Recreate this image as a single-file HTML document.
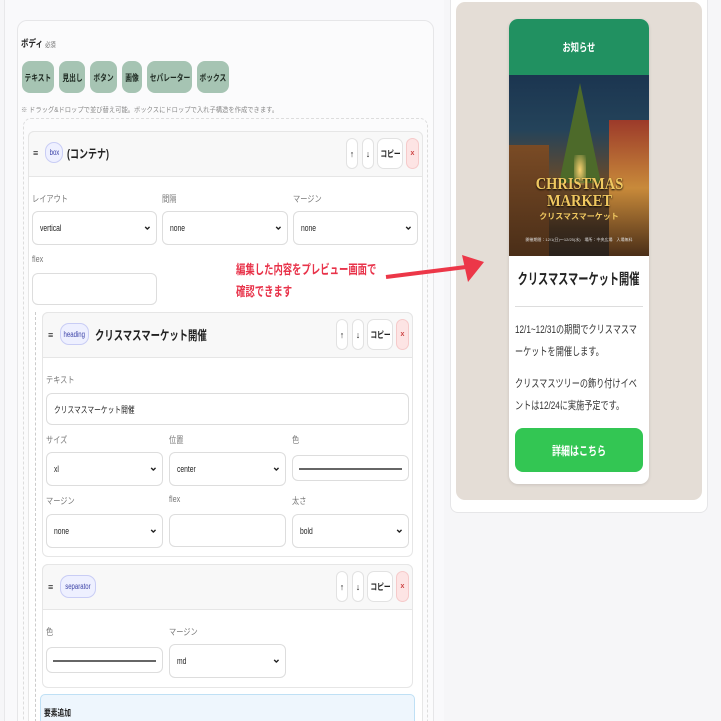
<!DOCTYPE html>
<html><head><meta charset="utf-8"><style>
*{box-sizing:border-box;margin:0;padding:0}
html,body{width:721px;height:721px;overflow:hidden}
body{background:#f6f6f8;font-family:"Liberation Sans","Noto Sans CJK JP",sans-serif;color:#222;position:relative}
.a{position:absolute;white-space:nowrap}
.c{display:inline-block;transform:scaleX(.75);transform-origin:left center;white-space:nowrap}
.cc{display:inline-block;transform:scaleX(.75);transform-origin:center center;white-space:nowrap}
.lbl{position:absolute;font-size:9px;color:#777;transform:scaleX(.8);transform-origin:left}
.inp{position:absolute;background:#fff;border:1px solid #ddd;border-radius:6px;font-size:9px;color:#222;padding-left:7px;display:flex;align-items:center;white-space:nowrap}
.sel::after{content:"⌄";position:absolute;right:4px;top:50%;transform:translateY(-65%);font-size:11px;font-weight:bold}
.line{position:absolute;height:1.5px;background:#666;left:6px;right:6px;top:50%}
.tb{position:absolute;background:#fff;border:1px solid #e2e2e2;border-radius:7px;font-size:9px;font-weight:bold;display:flex;align-items:center;justify-content:center;white-space:nowrap}
.x{background:#fde4e4;border-color:#f6caca;color:#c44;font-size:7px}
.badge{position:absolute;background:#eef0ff;border:1px solid #c9cdf5;border-radius:9px;font-size:8px;color:#3d44a8;display:flex;align-items:center;justify-content:center;white-space:nowrap}
.gb{position:absolute;top:61px;height:32px;background:#a6c4b3;border-radius:8px;font-size:9px;font-weight:bold;display:flex;align-items:center;justify-content:center;color:#1e2a22;white-space:nowrap}
</style></head><body>
<div class="a" style="left:4px;top:0;width:440px;height:721px;background:#f9f9fb;border-left:1px solid #e8e8ea"></div>
<div class="a" style="left:17px;top:20px;width:417px;height:720px;background:#fbfbfc;border:1px solid #e6e6e8;border-radius:10px"></div>
<div class="a" style="left:21px;top:35px;font-size:10px;font-weight:bold"><span class="c">ボディ <span style="font-size:7px;color:#666;font-weight:normal">必須</span></span></div>
<div class="gb" style="left:22px;width:32px"><span class="cc">テキスト</span></div>
<div class="gb" style="left:59px;width:26px"><span class="cc">見出し</span></div>
<div class="gb" style="left:90px;width:27px"><span class="cc">ボタン</span></div>
<div class="gb" style="left:122px;width:20px"><span class="cc">画像</span></div>
<div class="gb" style="left:147px;width:45px"><span class="cc">セパレーター</span></div>
<div class="gb" style="left:197px;width:32px"><span class="cc">ボックス</span></div>
<div class="a" style="left:21px;top:105px;font-size:7px;color:#888"><span class="c" style="transform:scaleX(.9)">※ ドラッグ&amp;ドロップで並び替え可能。ボックスにドロップで入れ子構造を作成できます。</span></div>
<div class="a" style="left:23px;top:118px;width:405px;height:620px;border:1px dashed #ddd;border-radius:8px"></div>
<div class="a" style="left:28px;top:131px;width:395px;height:600px;background:#fff;border:1px solid #e6e6e6;border-radius:6px"></div>
<div class="a" style="left:28px;top:131px;width:395px;height:46px;background:#f8f8f8;border:1px solid #e6e6e6;border-radius:6px 6px 0 0"></div>
<div class="a" style="left:33px;top:148px;font-size:9px">≡</div>
<div class="badge" style="left:45px;top:142px;width:18px;height:21px"><span class="cc">box</span></div>
<div class="a" style="left:67px;top:145px;font-size:12px;font-weight:bold"><span class="c">(コンテナ)</span></div>
<div class="tb" style="left:346px;top:138px;width:12px;height:31px">↑</div>
<div class="tb" style="left:362px;top:138px;width:12px;height:31px">↓</div>
<div class="tb" style="left:377px;top:138px;width:26px;height:31px"><span class="cc">コピー</span></div>
<div class="tb x" style="left:406px;top:138px;width:13px;height:31px">x</div>
<div class="lbl" style="left:32px;top:192px">レイアウト</div>
<div class="lbl" style="left:162px;top:192px">間隔</div>
<div class="lbl" style="left:293px;top:192px">マージン</div>
<div class="inp sel" style="left:32px;top:211px;width:125px;height:34px"><span class="c">vertical</span></div>
<div class="inp sel" style="left:162px;top:211px;width:126px;height:34px"><span class="c">none</span></div>
<div class="inp sel" style="left:293px;top:211px;width:125px;height:34px"><span class="c">none</span></div>
<div class="lbl" style="left:32px;top:254px">flex</div>
<div class="inp" style="left:32px;top:273px;width:125px;height:32px"></div>
<div class="a" style="left:236px;top:259px;font-size:13px;font-weight:bold;color:#e8334a;line-height:22px"><span class="c" style="transform:scaleX(.72)">編集した内容をプレビュー画面で<br>確認できます</span></div>
<div class="a" style="left:35px;top:312px;height:420px;border-left:1px dashed #ccc"></div>
<div class="a" style="left:42px;top:312px;width:371px;height:245px;background:#fff;border:1px solid #e6e6e6;border-radius:6px"></div>
<div class="a" style="left:42px;top:312px;width:371px;height:46px;background:#f8f8f8;border:1px solid #e6e6e6;border-radius:6px 6px 0 0"></div>
<div class="a" style="left:48px;top:330px;font-size:9px">≡</div>
<div class="badge" style="left:60px;top:323px;width:29px;height:22px"><span class="cc">heading</span></div>
<div class="a" style="left:95px;top:325px;font-size:13px;font-weight:bold"><span class="c" style="transform:scaleX(.72)">クリスマスマーケット開催</span></div>
<div class="tb" style="left:336px;top:319px;width:12px;height:31px">↑</div>
<div class="tb" style="left:352px;top:319px;width:12px;height:31px">↓</div>
<div class="tb" style="left:367px;top:319px;width:26px;height:31px"><span class="cc">コピー</span></div>
<div class="tb x" style="left:396px;top:319px;width:13px;height:31px">x</div>
<div class="lbl" style="left:46px;top:373px">テキスト</div>
<div class="inp" style="left:46px;top:393px;width:363px;height:32px"><span class="c">クリスマスマーケット開催</span></div>
<div class="lbl" style="left:46px;top:433px">サイズ</div>
<div class="lbl" style="left:169px;top:433px">位置</div>
<div class="lbl" style="left:292px;top:433px">色</div>
<div class="inp sel" style="left:46px;top:452px;width:117px;height:34px"><span class="c">xl</span></div>
<div class="inp sel" style="left:169px;top:452px;width:117px;height:34px"><span class="c">center</span></div>
<div class="inp" style="left:292px;top:455px;width:117px;height:26px"><div class="line"></div></div>
<div class="lbl" style="left:46px;top:494px">マージン</div>
<div class="lbl" style="left:169px;top:494px">flex</div>
<div class="lbl" style="left:292px;top:494px">太さ</div>
<div class="inp sel" style="left:46px;top:514px;width:117px;height:34px"><span class="c">none</span></div>
<div class="inp" style="left:169px;top:514px;width:117px;height:33px"></div>
<div class="inp sel" style="left:292px;top:514px;width:117px;height:34px"><span class="c">bold</span></div>
<div class="a" style="left:42px;top:564px;width:371px;height:124px;background:#fff;border:1px solid #e6e6e6;border-radius:6px"></div>
<div class="a" style="left:42px;top:564px;width:371px;height:46px;background:#f8f8f8;border:1px solid #e6e6e6;border-radius:6px 6px 0 0"></div>
<div class="a" style="left:48px;top:582px;font-size:9px">≡</div>
<div class="badge" style="left:60px;top:575px;width:36px;height:23px"><span class="cc">separator</span></div>
<div class="tb" style="left:336px;top:571px;width:12px;height:31px">↑</div>
<div class="tb" style="left:352px;top:571px;width:12px;height:31px">↓</div>
<div class="tb" style="left:367px;top:571px;width:26px;height:31px"><span class="cc">コピー</span></div>
<div class="tb x" style="left:396px;top:571px;width:13px;height:31px">x</div>
<div class="lbl" style="left:46px;top:625px">色</div>
<div class="lbl" style="left:169px;top:625px">マージン</div>
<div class="inp" style="left:46px;top:647px;width:117px;height:26px"><div class="line"></div></div>
<div class="inp sel" style="left:169px;top:644px;width:117px;height:34px"><span class="c">md</span></div>
<div class="a" style="left:40px;top:694px;width:375px;height:40px;background:#eef6fd;border:1px solid #bfe0f5;border-radius:5px"></div>
<div class="a" style="left:44px;top:706px;font-size:9px;font-weight:bold"><span class="c">要素追加</span></div>
<!-- right -->
<div class="a" style="left:450px;top:-10px;width:258px;height:523px;background:#fff;border:1px solid #e6e6e8;border-radius:8px"></div>
<div class="a" style="left:456px;top:2px;width:246px;height:498px;background:#e4ddd6;border-radius:9px"></div>
<svg class="a" style="left:380px;top:245px" width="110" height="45"><path d="M6 32 L86 22" stroke="#ec3748" stroke-width="4"/><path d="M82 10 L104 17 L88 37 Z" fill="#ec3748"/></svg>
<div class="a" style="left:509px;top:19px;width:140px;height:465px;background:#fff;border-radius:9px;overflow:hidden;box-shadow:0 1px 3px rgba(0,0,0,.12);white-space:normal">
<div style="height:56px;background:#219161;color:#fff;font-size:11px;font-weight:bold;display:flex;align-items:center;justify-content:center"><span class="cc">お知らせ</span></div>
<div style="position:relative;height:181px;background:linear-gradient(180deg,#1b3550 0%,#24435a 30%,#6b4a28 60%,#3a2a1c 85%,#2a221c 100%);overflow:hidden">
<div style="position:absolute;left:0;top:70px;width:40px;height:111px;background:linear-gradient(#7a4b25,#4a2e18)"></div>
<div style="position:absolute;right:0;top:45px;width:40px;height:136px;background:linear-gradient(#9c3a2a,#c88a3a 50%,#4a2e18)"></div>
<div style="position:absolute;left:50px;top:8px;width:0;height:0;border-left:21px solid transparent;border-right:21px solid transparent;border-bottom:100px solid #4d6a2a"></div>
<div style="position:absolute;left:65px;top:80px;width:12px;height:30px;background:radial-gradient(#f8d070,transparent)"></div>
<div style="position:absolute;left:0;right:0;top:100px;text-align:center;font-family:'Liberation Serif',serif;font-weight:bold;color:#f0c860;font-size:17px;line-height:17px;text-shadow:0 1px 2px #000"><span class="cc" style="transform:scaleX(.85)">CHRISTMAS<br>MARKET</span></div>
<div style="position:absolute;left:0;right:0;top:136px;text-align:center;color:#f0c860;font-size:8px;font-weight:bold">クリスマスマーケット</div>
<div style="position:absolute;left:-20px;right:-20px;top:162px;text-align:center;color:#ddd;font-size:4px;white-space:nowrap">開催期間：12/1(日)〜12/25(水)　場所：中央広場　入場無料</div>
</div>
<div style="position:absolute;left:-60px;right:-60px;top:249px;text-align:center;font-size:15px;font-weight:bold;white-space:nowrap"><span class="cc" style="transform:scaleX(.68)">クリスマスマーケット開催</span></div>
<div style="position:absolute;left:6px;right:6px;top:287px;border-top:1px solid #ddd"></div>
<div style="position:absolute;left:6px;top:300px;width:172px;font-size:11px;line-height:22px;color:#333;transform:scaleX(.74);transform-origin:left top">12/1~12/31の期間でクリスマスマーケットを開催します。</div>
<div style="position:absolute;left:6px;top:354px;width:172px;font-size:11px;line-height:22px;color:#333;transform:scaleX(.74);transform-origin:left top">クリスマスツリーの飾り付けイベントは12/24に実施予定です。</div>
<div style="position:absolute;left:6px;right:6px;top:409px;height:44px;background:#33c653;border-radius:8px;color:#fff;font-size:12px;font-weight:bold;display:flex;align-items:center;justify-content:center"><span class="cc">詳細はこちら</span></div>
</div>
</body></html>
